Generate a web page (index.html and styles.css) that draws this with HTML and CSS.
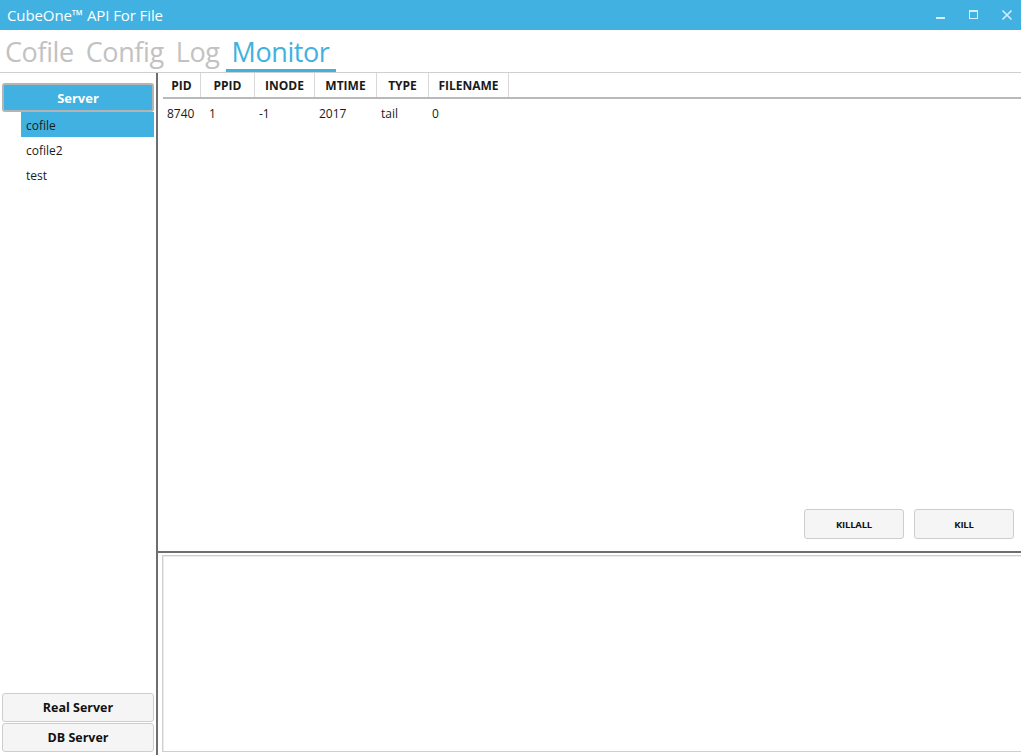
FILE: index.html
```html
<!DOCTYPE html>
<html>
<head>
<meta charset="utf-8">
<link rel="stylesheet" href="styles.css">
</head>
<body>
<div class="window">
  <header class="titlebar">
    <span class="title">CubeOne™ API For File</span>
    <div class="winbtns">
      <span class="winbtn"><svg width="12" height="12" viewBox="0 0 12 12"><rect x="1" y="8" width="9" height="2" fill="currentColor"/></svg></span>
      <span class="winbtn"><svg width="12" height="12" viewBox="0 0 12 12"><rect x="1.5" y="1.5" width="8" height="8" fill="none" stroke="currentColor" stroke-width="1"/><rect x="1" y="1" width="9" height="2" fill="currentColor"/></svg></span>
      <span class="winbtn"><svg width="12" height="12" viewBox="0 0 12 12"><path d="M1.5 1.5 L10.5 10.5 M10.5 1.5 L1.5 10.5" stroke="currentColor" stroke-width="1.6"/></svg></span>
    </div>
  </header>
  <nav class="tabs">
    <span class="tab">Cofile</span>
    <span class="tab">Config</span>
    <span class="tab">Log</span>
    <span class="tab active">Monitor</span>
  </nav>
  <main class="main">
    <aside class="side">
      <div class="side-top">
        <div class="server-btn">Server</div>
        <ul class="tree">
          <li class="tree-item selected">cofile</li>
          <li class="tree-item">cofile2</li>
          <li class="tree-item">test</li>
        </ul>
      </div>
      <div class="side-bottom">
        <div class="side-btn">Real Server</div>
        <div class="side-btn">DB Server</div>
      </div>
    </aside>
    <div class="vsplit"></div>
    <section class="content">
      <div class="upper">
        <div class="table">
          <div class="thead">
            <div class="th c1">PID</div>
            <div class="th c2">PPID</div>
            <div class="th c3">INODE</div>
            <div class="th c4">MTIME</div>
            <div class="th c5">TYPE</div>
            <div class="th c6">FILENAME</div>
          </div>
          <div class="trow">
            <div class="td c1">8740</div>
            <div class="td c2 wide">1</div>
            <div class="td c3">-1</div>
            <div class="td c4">2017</div>
            <div class="td c5">tail</div>
            <div class="td c6 narrow">0</div>
          </div>
        </div>
        <div class="actions">
          <button class="act-btn">KILLALL</button>
          <button class="act-btn">KILL</button>
        </div>
      </div>
      <div class="hsplit"></div>
      <div class="lower">
        <div class="output"></div>
      </div>
    </section>
  </main>
</div>
</body>
</html>
```
FILE: styles.css
```css
* { box-sizing: border-box; }
html, body {
  margin: 0;
  padding: 0;
  width: 1021px;
  height: 755px;
  overflow: hidden;
  background: #fff;
  font-family: "Open Sans", "Noto Sans", sans-serif;
  color: #1a1a1a;
}
.window {
  display: flex;
  flex-direction: column;
  height: 755px;
}
.titlebar {
  height: 30px;
  background: #41b1e1;
  display: flex;
  align-items: center;
  justify-content: space-between;
  padding-left: 7px;
  flex-shrink: 0;
}
.title {
  color: #fff;
  font-size: 15px;
  letter-spacing: -0.1px;
}
.winbtns {
  display: flex;
  height: 30px;
  margin-right: -2px;
}
.winbtn {
  width: 33px;
  height: 30px;
  display: flex;
  align-items: center;
  justify-content: center;
  color: #d6eef9;
}
.tabs {
  height: 43px;
  display: flex;
  align-items: flex-end;
  border-bottom: 1px solid #cfcfcf;
  flex-shrink: 0;
}
.tab {
  font-size: 27px;
  line-height: 34px;
  color: #c2c2c2;
  padding: 0 6px;
  border-bottom: 3px solid transparent;
  letter-spacing: -0.4px;
}
.tab:first-child { padding-left: 5px; }
.tab.active {
  color: #41b1e1;
  border-bottom-color: #41b1e1;
}
.main {
  flex: 1;
  display: flex;
  min-height: 0;
}
.side {
  width: 156px;
  display: flex;
  flex-direction: column;
  justify-content: space-between;
  padding: 10px 2px 3px 2px;
}
.server-btn {
  height: 29px;
  background: #41b1e1;
  border: 2px solid #b4b4b4;
  border-radius: 3px;
  color: #fff;
  font-weight: 700;
  font-size: 13px;
  display: flex;
  align-items: center;
  justify-content: center;
}
.tree {
  list-style: none;
  margin: 0;
  padding: 0 0 0 19px;
}
.tree-item {
  height: 25px;
  line-height: 27px;
  font-size: 12px;
  padding-left: 5px;
  color: #1a1a1a;
}
.tree-item.selected {
  background: #41b1e1;
}
.side-bottom {
  display: flex;
  flex-direction: column;
  gap: 1px;
}
.side-btn {
  height: 29px;
  background: #f5f5f5;
  border: 1px solid #cdcdcd;
  border-radius: 3px;
  font-weight: 700;
  font-size: 12.5px;
  display: flex;
  align-items: center;
  justify-content: center;
  color: #111;
}
.vsplit {
  width: 2px;
  background: #6e6e6e;
}
.content {
  flex: 1;
  display: flex;
  flex-direction: column;
  min-width: 0;
}
.upper {
  height: 478px;
  display: flex;
  flex-direction: column;
  justify-content: space-between;
  padding: 0 7px 12px 5px;
}
.thead {
  display: flex;
  height: 26px;
  border-bottom: 2px solid #b9b9b9;
  margin-right: -7px;
}
.th {
  font-size: 12px;
  font-weight: 700;
  color: #1a1a1a;
  text-align: center;
  line-height: 25px;
  border-right: 1px solid #d8d8d8;
}
.trow {
  display: flex;
  height: 24px;
  margin-top: 3px;
}
.td {
  font-size: 12px;
  line-height: 24px;
  padding-left: 4px;
  color: #1a1a1a;
}
.td.wide { padding-left: 8px; }
.td.narrow { padding-left: 3px; }
.c1 { width: 38px; }
.c2 { width: 54px; }
.c3 { width: 60px; }
.c4 { width: 62px; }
.c5 { width: 52px; }
.c6 { width: 80px; }
.actions {
  display: flex;
  justify-content: flex-end;
  gap: 10px;
}
.act-btn {
  width: 100px;
  height: 30px;
  background: #f5f5f5;
  border: 1px solid #cdcdcd;
  border-radius: 3px;
  font-family: inherit;
  font-weight: 700;
  font-size: 9.5px;
  letter-spacing: -0.2px;
  color: #111;
}
.hsplit {
  height: 2px;
  background: #6e6e6e;
}
.lower {
  flex: 1;
  padding: 2px 0 3px 4px;
  display: flex;
}
.output {
  flex: 1;
  border: 1px solid #cfcfcf;
  border-right: none;
  box-shadow: inset 1px 1px 0 #ececec;
}
```
